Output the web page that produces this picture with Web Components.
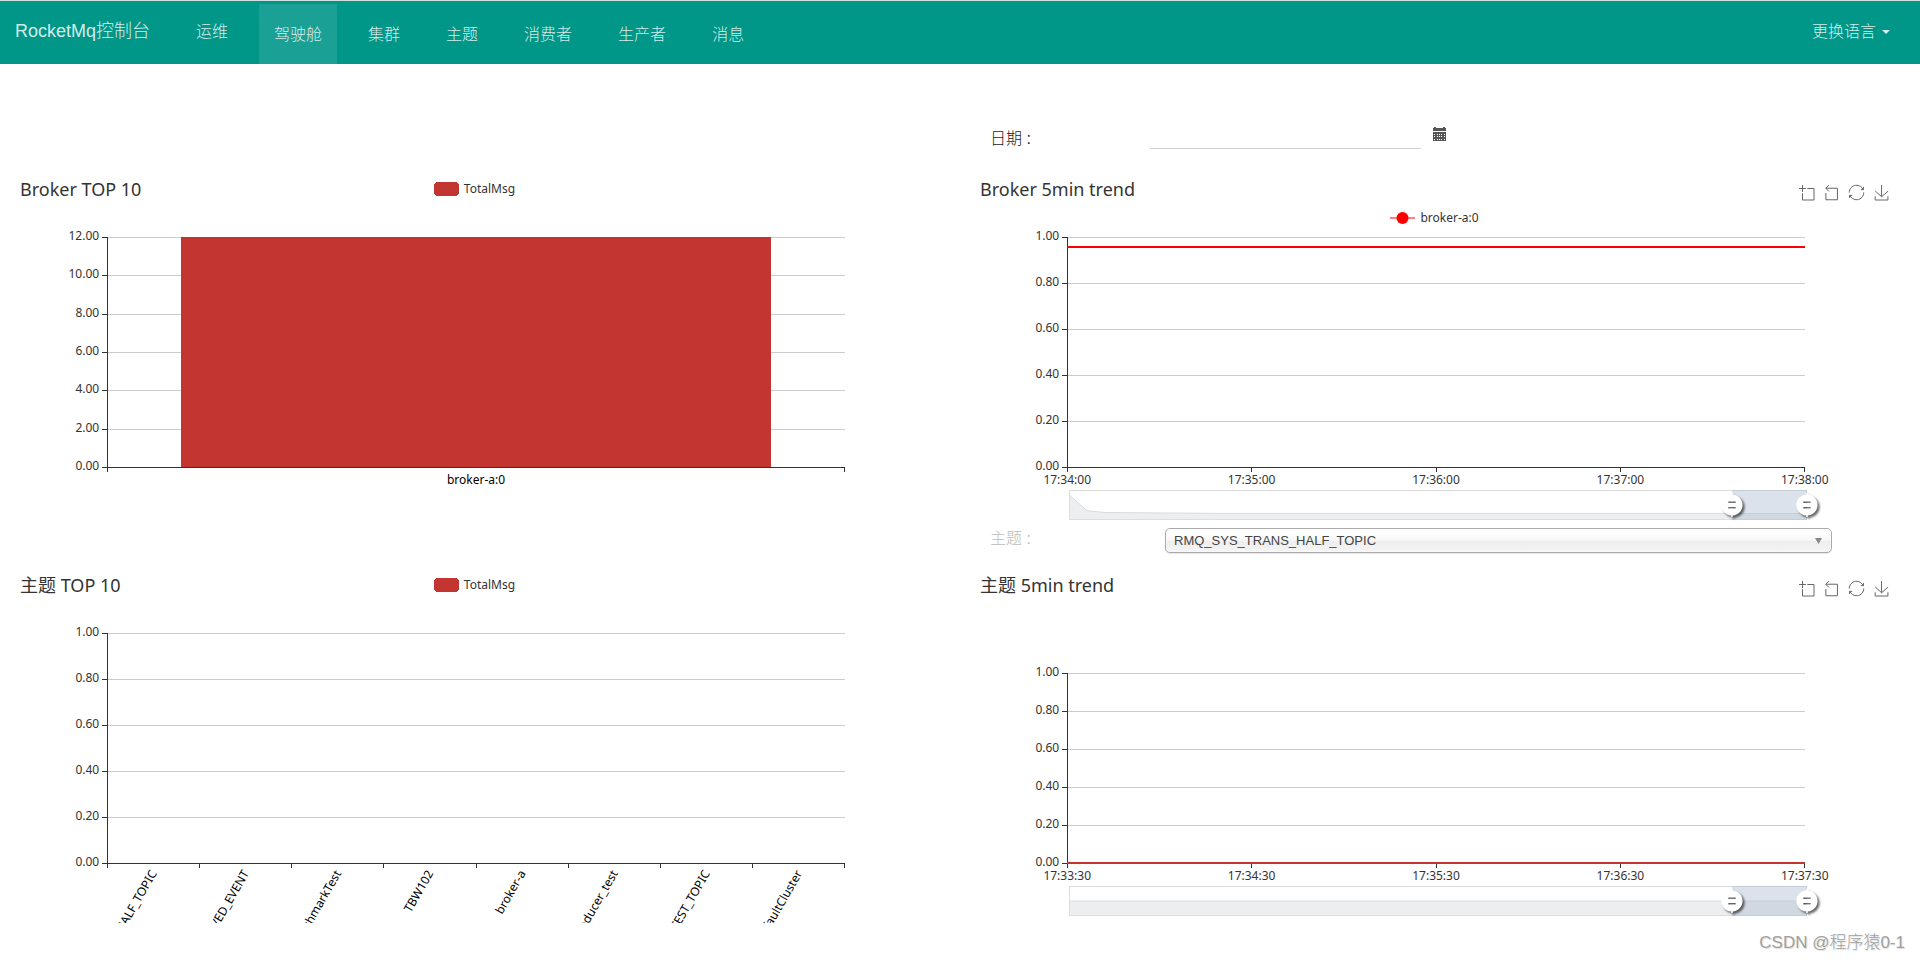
<!DOCTYPE html>
<html lang="zh-CN">
<head>
<meta charset="utf-8">
<meta name="viewport" content="width=device-width, initial-scale=1">
<title>RocketMq控制台</title>
<style>
  body {
    margin: 0;
    background: #fff;
    color: #333;
    font: 300 16px/20px "Liberation Sans", "Noto Sans CJK SC", sans-serif;
  }
</style>
</head>
<body>
<mq-dashboard></mq-dashboard>

<script>
const define = (name, html, setup) => {
  const template = document.createElement('template');
  template.innerHTML = html;
  customElements.define(name, class extends HTMLElement {
    connectedCallback() {
      if (this.shadowRoot) return;
      const root = this.attachShadow({ mode: 'open' });
      root.append(template.content.cloneNode(true));
      if (setup) setup(this, root);
    }
  });
};

/* One entry of the navigation bar */
define('mq-nav-link', `
  <style>
    :host { display: block; }
    a { display: block; padding: 2px 15px 0; line-height: 58px; color: rgba(255,255,255,.84); text-decoration: none; white-space: nowrap; }
    :host([active]) a { background: rgba(255,255,255,.1); }
  </style>
  <a href="#"><slot></slot></a>`);

/* Top navigation bar */
define('mq-navbar', `
  <style>
    :host { display: block; background: #009688; border-top: 1px solid #cfe0de; color: rgba(255,255,255,.84); }
    nav { display: flex; align-items: flex-start; height: 63px; }
    .brand { padding: 0 15px; font-size: 18px; line-height: 60px; color: inherit; text-decoration: none; white-space: nowrap; }
    .items { display: flex; gap: 16px; padding-top: 3px; margin-left: 16px; }
    .ops { margin-left: 16px; }
    button { display: flex; align-items: center; gap: 6px; height: 60px; margin-left: auto; padding: 2px 30px 0; border: 0; background: none; color: inherit; font: inherit; }
    svg { display: block; }
  </style>
  <nav>
    <a class="brand" href="#">RocketMq控制台</a>
    <mq-nav-link class="ops">运维</mq-nav-link>
    <div class="items">
      <mq-nav-link active>驾驶舱</mq-nav-link>
      <mq-nav-link>集群</mq-nav-link>
      <mq-nav-link>主题</mq-nav-link>
      <mq-nav-link>消费者</mq-nav-link>
      <mq-nav-link>生产者</mq-nav-link>
      <mq-nav-link>消息</mq-nav-link>
    </div>
    <button type="button">更换语言
      <svg width="8" height="4" viewBox="0 0 8 4" fill="currentColor" aria-hidden="true"><path d="M0 0h8L4 4z"/></svg>
    </button>
  </nav>`);

/* Date filter */
define('mq-date-field', `
  <style>
    :host { display: grid; grid-template-columns: 160px minmax(0, 271px) auto; align-items: center; justify-content: start; padding: 0 30px; color: #222; }
    label { padding-top: 8px; white-space: nowrap; }
    input { width: 100%; height: 28px; box-sizing: border-box; border: 0; border-bottom: 1px solid #d2d2d2; background: none; font: inherit; color: inherit; outline: 0; }
    button { margin: 0 0 2px 12px; padding: 0; border: 0; background: none; }
    svg { display: block; }
  </style>
  <label for="date">日期 :</label>
  <input id="date" type="text">
  <button type="button" aria-label="日期">
    <svg width="13" height="14" viewBox="0 0 13 14" fill="#555" shape-rendering="crispEdges">
      <path d="M0 1h1V0h2v1h7V0h2v1h1v3H0z"/>
      <path d="M0 5h13v9H0z"/>
      <path fill="#fff" d="M1 7h1v1h-1zM4 7h1v1h-1zM6 7h1v1h-1zM8 7h1v1h-1zM11 7h1v1h-1zM1 9h1v1h-1zM4 9h1v1h-1zM6 9h1v1h-1zM8 9h1v1h-1zM11 9h1v1h-1zM1 12h1v1h-1zM4 12h1v1h-1zM6 12h1v1h-1zM8 12h1v1h-1zM11 12h1v1h-1z"/>
    </svg>
  </button>`);

/* Topic drop-down */
define('mq-topic-field', `
  <style>
    :host { display: grid; grid-template-columns: 175px minmax(0, 1fr); align-items: start; padding: 1px 88px 0 30px; }
    label { padding-top: 1px; color: #bdbdbd; white-space: nowrap; }
    .box { display: grid; align-items: center; }
    .box > * { grid-area: 1 / 1; }
    select {
      appearance: none; width: 100%; height: 25px; padding: 0 8px; border: 1px solid #aaa; border-radius: 5px;
      background: linear-gradient(#fff 20%, #f6f6f6 50%, #eee 52%, #f4f4f4 100%);
      box-shadow: 0 0 3px #fff inset, 0 1px 1px rgba(0,0,0,.1);
      color: #444; font: 13px/23px "Liberation Sans", sans-serif;
    }
    svg { display: block; justify-self: end; margin-right: 10px; pointer-events: none; }
  </style>
  <label for="topic">主题 :</label>
  <div class="box">
    <select id="topic"><option>RMQ_SYS_TRANS_HALF_TOPIC</option></select>
    <svg width="7" height="6" viewBox="0 0 7 6" fill="#888" aria-hidden="true"><path d="M0 0h7L3.500 6z"/></svg>
  </div>`);

/* Chart actions: area zoom, zoom reset, restore, save */
define('mq-toolbox', `
  <style>
    :host { display: flex; gap: 10px; }
    button { padding: 0; border: 0; background: none; }
    svg { display: block; overflow: visible; fill: none; stroke: #666; }
    path { vector-effect: non-scaling-stroke; }
  </style>
  <button type="button" aria-label="zoom"><svg width="15" height="15" viewBox="0 0 58 58"><path d="M0,13.5h26.9 M13.5,26.9V0 M32.1,13.5H58V58H13.5 V32.1"/></svg></button>
  <button type="button" aria-label="back"><svg width="15" height="15" viewBox="3 1 58 58"><path d="M22,1.4L9.9,13.5l12.3,12.3 M10.3,13.5H54.9v44.6 H10.3v-26"/></svg></button>
  <button type="button" aria-label="restore"><svg width="15" height="15" viewBox="1 1 58 58"><path d="M47,18.9h9.8V8.7 M56.3,20.1 C52.1,9,40.5,0.6,26.8,2.1C12.6,3.7,1.6,16.2,2.1,30.6 M13,41.1H3.1v10.2 M3.7,39.9c4.2,11.1,15.8,19.5,29.5,18 c14.2-1.6,25.2-14.1,24.7-28.5"/></svg></button>
  <button type="button" aria-label="save"><svg width="15" height="15" viewBox="0 0 58 58"><path d="M4.7,22.9L29.3,45.5L54.7,23.4M4.6,43.6L4.6,58L53.8,58L53.8,43.6M29.2,45.1L29.2,0"/></svg></button>`);

/* Range slider below a trend chart; "shape" is the overview curve in a 1000 x 30 box */
define('mq-data-zoom', `
  <style>
    :host { display: block; position: relative; height: 30px; box-sizing: border-box; border: 1px solid #ddd; }
    .overview { display: block; width: 100%; height: 100%; }
    .window { position: absolute; inset: -1px -1px -1px 90%; background: rgba(167,183,204,.4); }
    button { position: absolute; top: 3px; width: 22px; height: 24px; padding: 0; border: 0; background: none; }
    button svg { display: block; overflow: visible; filter: drop-shadow(2px 2px 1px rgba(0,0,0,.6)); }
    .from { left: -11px; }
    .to { right: -11px; }
  </style>
  <svg class="overview" viewBox="0 0 1000 30" preserveAspectRatio="none" aria-hidden="true">
    <path class="area" fill="rgb(47,69,84)" fill-opacity=".09"/>
    <path class="line" fill="none" stroke="#d9dcde" vector-effect="non-scaling-stroke"/>
  </svg>
  <div class="window">
    <button type="button" class="from" aria-label="start"></button>
    <button type="button" class="to" aria-label="end"></button>
  </div>`, (host, root) => {
  const shape = host.getAttribute('shape');
  root.querySelector('.area').setAttribute('d', `M0 30L${shape}L1000 30z`);
  root.querySelector('.line').setAttribute('d', `M${shape}`);
  for (const button of root.querySelectorAll('button')) {
    button.innerHTML = '<svg width="22" height="24" viewBox="0.2 10.600 19.600 21.400"><path fill="#fff" d="M10.7,11.9v-1.3H9.3v1.3c-4.9,0.3-8.8,4.4-8.8,9.4c0,5,3.9,9.1,8.8,9.4v1.3h1.3v-1.3c4.9-0.3,8.8-4.4,8.8-9.4C19.5,16.3,15.6,12.2,10.7,11.9z M13.3,24.4H6.7V23h6.6V24.4z M13.3,19.6H6.7v-1.4h6.6V19.6z"/></svg>';
  }
});

/* Chart with axes. Horizontal positions are percentages, so the plot follows the width. */
define('mq-chart', `
  <style>
    :host { display: grid; height: 350px; margin: 0 23px 0 15px; font-family: "Noto Sans", "Noto Sans CJK SC", sans-serif; font-weight: 400; }
    header, .plot, ::slotted(*) { grid-area: 1 / 1; }
    header { display: grid; grid-template-columns: 1fr auto 1fr; align-content: start; padding: 0 8px 0 5px; z-index: 1; }
    h2 { margin: 0; font-size: 18px; line-height: 24px; font-weight: 400; }
    .legend { display: flex; align-items: center; gap: 5px; height: 24px; font-size: 12px; }
    .legend svg { display: block; }
    :host([kind="line"]) .legend { grid-area: 2 / 2; margin-top: 5px; }
    mq-toolbox { grid-column: 3; justify-self: end; padding-top: 6px; }
    .plot { display: block; width: 100%; height: 100%; overflow: hidden; font-size: 12px; }
    .grid line { stroke: #ccc; }
    .axis line { stroke: #333; }
    line, rect { shape-rendering: crispEdges; }
    text { fill: #333; }
    .category text { fill: #000; }
    ::slotted(mq-data-zoom) { align-self: end; justify-self: end; width: 80%; margin: 0 90px 7px 0; }
  </style>
  <header><h2></h2></header>
  <svg class="plot" role="img"></svg>
  <slot></slot>`, (host, root) => {
  const get = (name) => host.getAttribute(name);
  const list = (name) => (get(name) || '').split(',').filter(Boolean);
  const bottom = 290;
  const top = Number(get('top') || 60);
  const bar = get('kind') === 'bar';
  const color = get('color') || '#c23531';
  const left = 10, width = 80;

  root.querySelector('h2').textContent = get('heading');
  const header = root.querySelector('header');
  if (get('series')) {
    const symbol = bar
      ? `<svg width="25" height="14"><rect width="25" height="14" rx="4" fill="${color}"/></svg>`
      : `<svg width="25" height="14"><path d="M0 7h25" stroke="${color}" stroke-opacity=".5" stroke-width="2"/><circle cx="12.500" cy="7" r="6" fill="${color}"/></svg>`;
    header.insertAdjacentHTML('beforeend', `<div class="legend">${symbol}<span>${get('series')}</span></div>`);
  }
  if (!bar) header.insertAdjacentHTML('beforeend', '<mq-toolbox></mq-toolbox>');

  const values = list('values');
  let grid = '', axis = '', labels = '';
  values.forEach((value, i) => {
    const y = Math.round(bottom - (bottom - top) * i / (values.length - 1));
    if (i) grid += `<line x1="${left}%" x2="${left + width}%" y1="${y}" y2="${y}"/>`;
    axis += `<svg x="${left}%" y="${y}" overflow="visible"><line x1="-5" x2="0" y1="0" y2="0"/></svg>`;
    labels += `<text x="${left}%" dx="-8" y="${y + 3}" text-anchor="end">${value}</text>`;
  });
  axis += `<line x1="${left}%" x2="${left}%" y1="${top}" y2="${bottom}"/>`;
  axis += `<line x1="${left}%" x2="${left + width}%" y1="${bottom}" y2="${bottom}"/>`;

  const ticks = list('ticks');
  const steps = bar ? ticks.length : ticks.length - 1;
  for (let i = 0; i <= steps; i++) {
    const x = left + width * i / steps;
    axis += `<line x1="${x}%" x2="${x}%" y1="${bottom}" y2="${bottom + 5}"/>`;
  }
  let names = '';
  ticks.forEach((name, i) => {
    const x = left + width * (bar ? i + 0.5 : i) / steps;
    names += host.hasAttribute('slanted')
      ? `<svg x="${x}%" y="${bottom + 8}" overflow="visible"><text transform="rotate(-60)" text-anchor="end" dominant-baseline="central">${name}</text></svg>`
      : `<text x="${x}%" y="${bottom + 17}" text-anchor="middle">${name}</text>`;
  });

  let data = '';
  if (get('level') !== null) {
    const y = Math.round(bottom - (bottom - top) * Number(get('level')));
    data = bar
      ? `<rect x="18%" width="64%" y="${y}" height="${bottom - y}" fill="${color}"/>`
      : `<line x1="${left}%" x2="${left + width}%" y1="${y}" y2="${y}" stroke="${color}" stroke-width="2"/>`;
  }
  root.querySelector('.plot').innerHTML =
    `<g class="grid">${grid}</g>${bar ? data : ''}<g class="axis">${axis}</g>${bar ? '' : data}<g>${labels}</g><g class="${bar ? 'category' : ''}">${names}</g>`;
});

/* Whole page */
define('mq-dashboard', `
  <style>
    :host { display: flex; flex-direction: column; min-height: 100vh; }
    main { display: grid; grid-template-columns: minmax(0, 1fr) minmax(0, 1fr); }
    mq-date-field, mq-topic-field { grid-column: 2; }
    mq-date-field { padding-top: 57px; padding-bottom: 28px; }
    mq-topic-field { min-height: 45px; }
    footer { padding: 9px 15px 0; text-align: right; font-size: 17px; line-height: 22px; color: #a0a0a0; text-shadow: 1px 1px 1px #ddd; }
  </style>
  <mq-navbar></mq-navbar>
  <main>
    <mq-date-field></mq-date-field>
    <mq-chart kind="bar" heading="Broker TOP 10" series="TotalMsg" level="1"
      values="0.00,2.00,4.00,6.00,8.00,10.00,12.00" ticks="broker-a:0"></mq-chart>
    <mq-chart kind="line" heading="Broker 5min trend" series="broker-a:0" color="#f00" level="0.957"
      values="0.00,0.20,0.40,0.60,0.80,1.00" ticks="17:34:00,17:35:00,17:36:00,17:37:00,17:38:00">
      <mq-data-zoom shape="0 5L23 21L46 23L200 24L1000 24"></mq-data-zoom>
    </mq-chart>
    <mq-topic-field></mq-topic-field>
    <mq-chart kind="bar" slanted heading="主题 TOP 10" series="TotalMsg"
      values="0.00,0.20,0.40,0.60,0.80,1.00"
      ticks="RMQ_SYS_TRANS_HALF_TOPIC,OFFSET_MOVED_EVENT,BenchmarkTest,TBW102,broker-a,producer_test,SELF_TEST_TOPIC,DefaultCluster"></mq-chart>
    <mq-chart kind="line" heading="主题 5min trend" top="100" level="0"
      values="0.00,0.20,0.40,0.60,0.80,1.00" ticks="17:33:30,17:34:30,17:35:30,17:36:30,17:37:30">
      <mq-data-zoom shape="0 15L1000 15"></mq-data-zoom>
    </mq-chart>
  </main>
  <footer>CSDN @程序猿0-1</footer>`);
</script>
</body>
</html>
